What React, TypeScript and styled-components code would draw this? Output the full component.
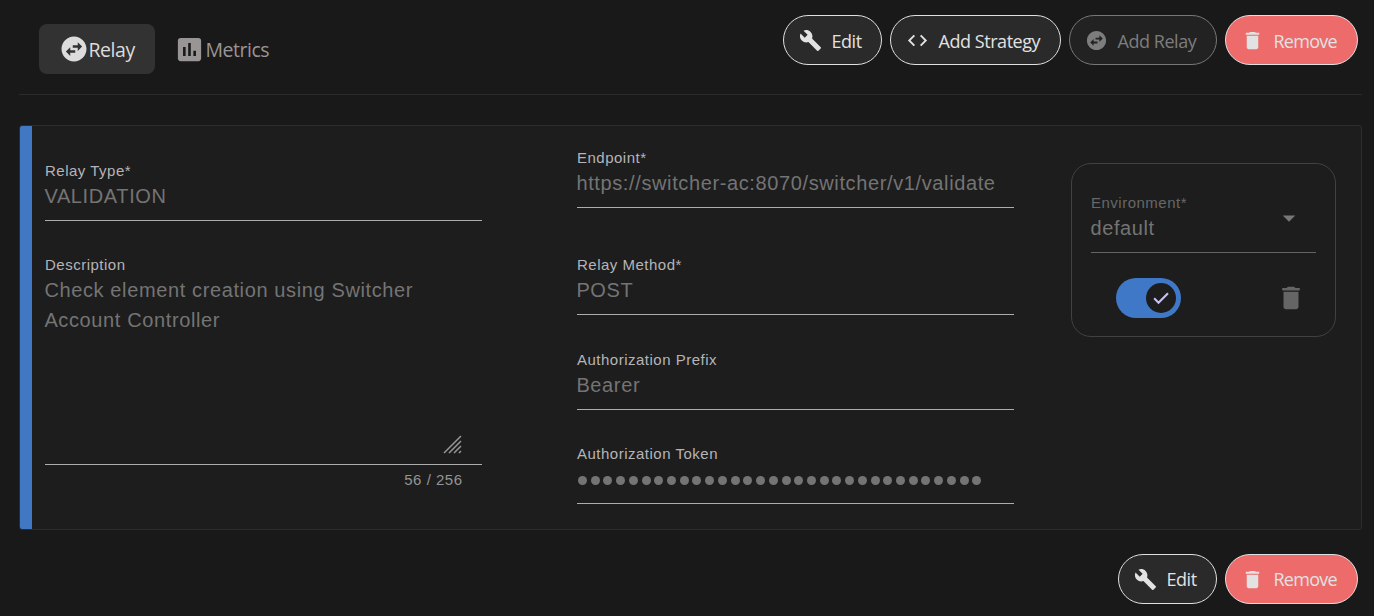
import React from "react";
import styled, { createGlobalStyle } from "styled-components";
import {
  MdArrowDropDown,
  MdBuild,
  MdCode,
  MdDelete,
  MdInsertChart,
  MdSwapHorizontalCircle,
} from "react-icons/md";

const GlobalStyle = createGlobalStyle`
  *, *::before, *::after { box-sizing: border-box; }
  body {
    margin: 0;
    background: #191919;
    font-family: "Liberation Sans", Arial, sans-serif;
  }
  svg { display: block; flex: none; }
`;

const Page = styled.main`
  height: 616px;
  padding: 0 12px 0 19px;
  overflow: hidden;
`;

const Header = styled.header`
  display: flex;
  justify-content: space-between;
  align-items: flex-start;
  height: 95px;
  padding: 15px 4px 0 20px;
  border-bottom: 1px solid #2b2b2b;
`;

const Tabs = styled.nav`
  display: flex;
  gap: 4px;
  padding-top: 9px;
`;

const Tab = styled.button<{ $active?: boolean }>`
  display: flex;
  align-items: center;
  height: 50px;
  width: ${(p) => (p.$active ? "116px" : "130px")};
  padding: 0 0 0 ${(p) => (p.$active ? "19.5px" : "15.4px")};
  border: 0;
  border-radius: 8px;
  background: ${(p) => (p.$active ? "#323232" : "transparent")};
  color: ${(p) => (p.$active ? "#dcdcdc" : "#999595")};
  font-family: "Open Sans", "Noto Sans", sans-serif;
  font-size: 19.5px;
  font-weight: 400;
  letter-spacing: -0.45px;
  white-space: nowrap;
`;

const TabLabel = styled.span`
  padding-top: 1px;
`;

const Actions = styled.div`
  display: flex;
  justify-content: flex-end;
  gap: 8px;
`;

const PillButton = styled.button<{ $width: number; $tone?: "danger" | "muted" }>`
  display: flex;
  align-items: center;
  width: ${(p) => p.$width}px;
  height: 50px;
  padding: 0 0 0 15px;
  border: 1px solid ${(p) => (p.$tone === "muted" ? "#777777" : "#e0e0e0")};
  border-radius: 25px;
  background: ${(p) =>
    p.$tone === "danger" ? "#ee6b6b" : p.$tone === "muted" ? "#222222" : "#2a2a2a"};
  color: ${(p) => (p.$tone === "muted" ? "#7d7d7d" : "#e2e2e2")};
  font-family: "Open Sans", "Noto Sans", sans-serif;
  font-size: 18px;
  font-weight: 400;
  letter-spacing: ${(p) => (p.$tone === "danger" ? "-0.75px" : "-0.45px")};
  white-space: nowrap;
`;

const PillLabel = styled.span`
  padding: 1px 0 0 9.5px;
`;

const Card = styled.section`
  display: flex;
  height: 405px;
  margin-top: 30px;
  border: 1px solid #2c2c2c;
  border-radius: 3px;
  background: #1d1d1d;
  overflow: hidden;
`;

const Accent = styled.div`
  width: 12px;
  background: #4078c4;
`;

const Column = styled.div<{ $top: number; $left: number }>`
  display: flex;
  flex-direction: column;
  width: 437px;
  margin-left: ${(p) => p.$left}px;
  padding-top: ${(p) => p.$top}px;
`;

const FieldBox = styled.div<{ $height?: number; $gap?: number; $muted?: boolean }>`
  display: flex;
  flex-direction: column;
  position: relative;
  height: ${(p) => p.$height ?? 60}px;
  margin-top: ${(p) => p.$gap ?? 0}px;
  border-bottom: 1px solid ${(p) => (p.$muted ? "#636363" : "#adadad")};
  color: ${(p) => (p.$muted ? "#676767" : "#b5b4b8")};
`;

const Label = styled.label`
  font-size: 15px;
  line-height: 20px;
  letter-spacing: 0.5px;
`;

const Value = styled.div`
  max-width: 425px;
  margin-left: -0.6px;
  color: #747474;
  font-size: 20px;
  line-height: 30px;
  letter-spacing: 0.62px;
`;

const Dots = styled.div`
  display: flex;
  gap: 3.73px;
  padding: 12px 0 0 1px;
`;

const Dot = styled.span`
  width: 9px;
  height: 9px;
  border-radius: 50%;
  background: #747474;
`;

const ResizeGrip = styled.svg`
  align-self: flex-end;
  margin: auto 20.5px 10px 0;
`;

const Counter = styled.div`
  padding: 5px 19.5px 0 0;
  color: #949494;
  font-size: 15px;
  line-height: 20px;
  letter-spacing: 0.5px;
  text-align: right;
`;

const EnvironmentCard = styled.aside`
  width: 265px;
  height: 174px;
  margin: 37px 0 0 57px;
  padding: 29px 19px 0;
  border: 1px solid #414141;
  border-radius: 20px;
`;

const SelectArrow = styled.span`
  position: absolute;
  right: 12px;
  top: 10px;
  color: #777777;
`;

const EnvironmentActions = styled.div`
  display: flex;
  align-items: center;
  justify-content: space-between;
  padding: 25px 10px 0 25px;
  color: #656565;
`;

const Toggle = styled.span`
  display: flex;
  align-items: center;
  justify-content: flex-end;
  width: 65px;
  height: 40px;
  padding-right: 5px;
  border-radius: 20px;
  background: #4078c8;
`;

const Knob = styled.span`
  display: flex;
  align-items: center;
  justify-content: center;
  width: 30px;
  height: 30px;
  border-radius: 50%;
  background: #1d1d1d;
  color: #c9bfff;
`;

const Footer = styled.footer`
  padding: 24px 4px 0 0;

  ${PillLabel} {
    padding-top: 0;
  }
`;

type FieldProps = {
  label: string;
  value?: string;
  gap?: number;
  height?: number;
  muted?: boolean;
  children?: React.ReactNode;
};

const Field = ({ label, value, gap, height, muted, children }: FieldProps) => (
  <FieldBox $gap={gap} $height={height} $muted={muted}>
    <Label>{label}</Label>
    {value && <Value>{value}</Value>}
    {children}
  </FieldBox>
);

const EditButton = () => (
  <PillButton $width={99}>
    <MdBuild size={23} />
    <PillLabel>Edit</PillLabel>
  </PillButton>
);

const RemoveButton = () => (
  <PillButton $width={133} $tone="danger">
    <MdDelete size={23} />
    <PillLabel>Remove</PillLabel>
  </PillButton>
);

export default function App() {
  return (
    <Page>
      <GlobalStyle />
      <Header>
        <Tabs>
          <Tab $active>
            <MdSwapHorizontalCircle size={30} />
            <TabLabel>Relay</TabLabel>
          </Tab>
          <Tab>
            <MdInsertChart size={31} />
            <TabLabel>Metrics</TabLabel>
          </Tab>
        </Tabs>
        <Actions>
          <EditButton />
          <PillButton $width={171}>
            <MdCode size={23} />
            <PillLabel>Add Strategy</PillLabel>
          </PillButton>
          <PillButton $width={148} $tone="muted">
            <MdSwapHorizontalCircle size={23} />
            <PillLabel>Add Relay</PillLabel>
          </PillButton>
          <RemoveButton />
        </Actions>
      </Header>

      <Card>
        <Accent />
        <Column $top={35} $left={13}>
          <Field label="Relay Type*" value="VALIDATION" />
          <Field
            label="Description"
            value="Check element creation using Switcher Account Controller"
            gap={34}
            height={210}
          >
            <ResizeGrip width="19" height="19" viewBox="0 0 19 19" stroke="#969696" strokeWidth="1.5">
              <path d="M1 18 18 1M6 18 18 6M11 18l7-7M16 18l2-2" />
            </ResizeGrip>
          </Field>
          <Counter>56 / 256</Counter>
        </Column>
        <Column $top={22} $left={95}>
          <Field label="Endpoint*" value="https://switcher-ac:8070/switcher/v1/validate" />
          <Field label="Relay Method*" value="POST" gap={47} />
          <Field label="Authorization Prefix" value="Bearer" gap={35} />
          <Field label="Authorization Token" gap={34}>
            <Dots>
              {Array.from({ length: 32 }, (_, i) => (
                <Dot key={i} />
              ))}
            </Dots>
          </Field>
        </Column>
        <EnvironmentCard>
          <Field label="Environment*" value="default" muted>
            <SelectArrow>
              <MdArrowDropDown size={30} />
            </SelectArrow>
          </Field>
          <EnvironmentActions>
            <Toggle>
              <Knob>
                <svg width="20" height="20" viewBox="0 0 24 24" fill="none" stroke="currentColor" strokeWidth="2.5">
                  <path d="M3.8 12.4 9 17.6 20.4 6.2" />
                </svg>
              </Knob>
            </Toggle>
            <MdDelete size={30} />
          </EnvironmentActions>
        </EnvironmentCard>
      </Card>

      <Footer>
        <Actions>
          <EditButton />
          <RemoveButton />
        </Actions>
      </Footer>
    </Page>
  );
}
